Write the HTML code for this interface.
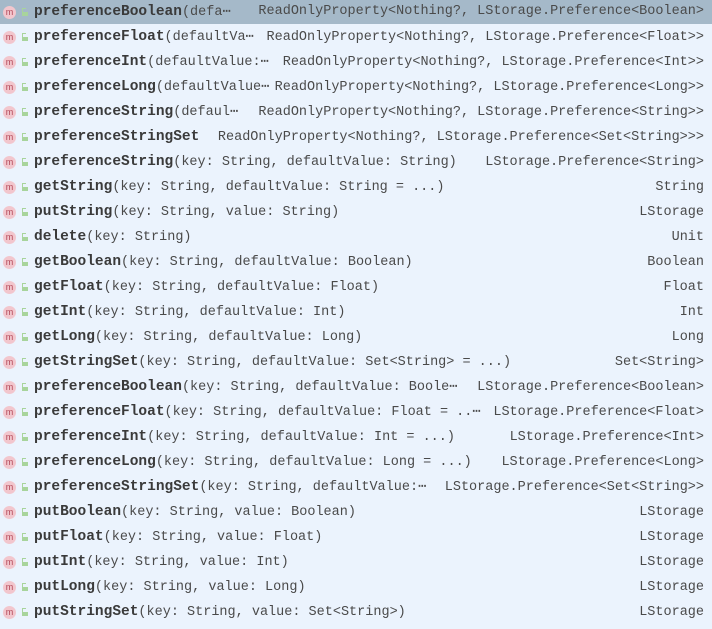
<!DOCTYPE html><html><head><style>
body{margin:0;width:712px;height:629px;background:#ebf3fd;overflow:hidden;font-family:"Liberation Mono",monospace;font-size:13.5px;color:#4a4a4a}
.r{position:absolute;left:0;width:712px;height:25px;line-height:25px;white-space:pre}
.r.s{background:#a5b9c9;height:24px;line-height:24px}
.i{position:absolute;left:3px;top:6px;width:13px;height:13px;border-radius:50%;background:#f2c6cd;color:#b34858;font-size:9px;line-height:12px;text-align:center;font-family:"Liberation Sans",sans-serif}
.l{position:absolute;left:22px;top:8px;width:3px;height:3px;border:1px solid #a8d49c;border-bottom:none;border-right:none}
.l:after{content:"";position:absolute;left:-1px;top:3px;width:6px;height:4px;background:#a8d49c}
.n{position:absolute;left:34px}
.n b{font-weight:bold;font-size:14.5px;color:#3a3a3a}
.t{position:absolute;right:8px}
</style></head><body>
<div class="r s" style="top:0"><span class="i">m</span><span class="l"></span><span class="n"><b>preferenceBoolean</b>(defa⋯</span><span class="t">ReadOnlyProperty&lt;Nothing?, LStorage.Preference&lt;Boolean&gt;</span></div>
<div class="r" style="top:25px"><span class="i">m</span><span class="l"></span><span class="n"><b>preferenceFloat</b>(defaultVa⋯</span><span class="t">ReadOnlyProperty&lt;Nothing?, LStorage.Preference&lt;Float&gt;&gt;</span></div>
<div class="r" style="top:50px"><span class="i">m</span><span class="l"></span><span class="n"><b>preferenceInt</b>(defaultValue:⋯</span><span class="t">ReadOnlyProperty&lt;Nothing?, LStorage.Preference&lt;Int&gt;&gt;</span></div>
<div class="r" style="top:75px"><span class="i">m</span><span class="l"></span><span class="n"><b>preferenceLong</b>(defaultValue⋯</span><span class="t">ReadOnlyProperty&lt;Nothing?, LStorage.Preference&lt;Long&gt;&gt;</span></div>
<div class="r" style="top:100px"><span class="i">m</span><span class="l"></span><span class="n"><b>preferenceString</b>(defaul⋯</span><span class="t">ReadOnlyProperty&lt;Nothing?, LStorage.Preference&lt;String&gt;&gt;</span></div>
<div class="r" style="top:125px"><span class="i">m</span><span class="l"></span><span class="n"><b>preferenceStringSet</b></span><span class="t">ReadOnlyProperty&lt;Nothing?, LStorage.Preference&lt;Set&lt;String&gt;&gt;&gt;</span></div>
<div class="r" style="top:150px"><span class="i">m</span><span class="l"></span><span class="n"><b>preferenceString</b>(key: String, defaultValue: String)</span><span class="t">LStorage.Preference&lt;String&gt;</span></div>
<div class="r" style="top:175px"><span class="i">m</span><span class="l"></span><span class="n"><b>getString</b>(key: String, defaultValue: String = ...)</span><span class="t">String</span></div>
<div class="r" style="top:200px"><span class="i">m</span><span class="l"></span><span class="n"><b>putString</b>(key: String, value: String)</span><span class="t">LStorage</span></div>
<div class="r" style="top:225px"><span class="i">m</span><span class="l"></span><span class="n"><b>delete</b>(key: String)</span><span class="t">Unit</span></div>
<div class="r" style="top:250px"><span class="i">m</span><span class="l"></span><span class="n"><b>getBoolean</b>(key: String, defaultValue: Boolean)</span><span class="t">Boolean</span></div>
<div class="r" style="top:275px"><span class="i">m</span><span class="l"></span><span class="n"><b>getFloat</b>(key: String, defaultValue: Float)</span><span class="t">Float</span></div>
<div class="r" style="top:300px"><span class="i">m</span><span class="l"></span><span class="n"><b>getInt</b>(key: String, defaultValue: Int)</span><span class="t">Int</span></div>
<div class="r" style="top:325px"><span class="i">m</span><span class="l"></span><span class="n"><b>getLong</b>(key: String, defaultValue: Long)</span><span class="t">Long</span></div>
<div class="r" style="top:350px"><span class="i">m</span><span class="l"></span><span class="n"><b>getStringSet</b>(key: String, defaultValue: Set&lt;String&gt; = ...)</span><span class="t">Set&lt;String&gt;</span></div>
<div class="r" style="top:375px"><span class="i">m</span><span class="l"></span><span class="n"><b>preferenceBoolean</b>(key: String, defaultValue: Boole⋯</span><span class="t">LStorage.Preference&lt;Boolean&gt;</span></div>
<div class="r" style="top:400px"><span class="i">m</span><span class="l"></span><span class="n"><b>preferenceFloat</b>(key: String, defaultValue: Float = ..⋯</span><span class="t">LStorage.Preference&lt;Float&gt;</span></div>
<div class="r" style="top:425px"><span class="i">m</span><span class="l"></span><span class="n"><b>preferenceInt</b>(key: String, defaultValue: Int = ...)</span><span class="t">LStorage.Preference&lt;Int&gt;</span></div>
<div class="r" style="top:450px"><span class="i">m</span><span class="l"></span><span class="n"><b>preferenceLong</b>(key: String, defaultValue: Long = ...)</span><span class="t">LStorage.Preference&lt;Long&gt;</span></div>
<div class="r" style="top:475px"><span class="i">m</span><span class="l"></span><span class="n"><b>preferenceStringSet</b>(key: String, defaultValue:⋯</span><span class="t">LStorage.Preference&lt;Set&lt;String&gt;&gt;</span></div>
<div class="r" style="top:500px"><span class="i">m</span><span class="l"></span><span class="n"><b>putBoolean</b>(key: String, value: Boolean)</span><span class="t">LStorage</span></div>
<div class="r" style="top:525px"><span class="i">m</span><span class="l"></span><span class="n"><b>putFloat</b>(key: String, value: Float)</span><span class="t">LStorage</span></div>
<div class="r" style="top:550px"><span class="i">m</span><span class="l"></span><span class="n"><b>putInt</b>(key: String, value: Int)</span><span class="t">LStorage</span></div>
<div class="r" style="top:575px"><span class="i">m</span><span class="l"></span><span class="n"><b>putLong</b>(key: String, value: Long)</span><span class="t">LStorage</span></div>
<div class="r" style="top:600px"><span class="i">m</span><span class="l"></span><span class="n"><b>putStringSet</b>(key: String, value: Set&lt;String&gt;)</span><span class="t">LStorage</span></div>
</body></html>
